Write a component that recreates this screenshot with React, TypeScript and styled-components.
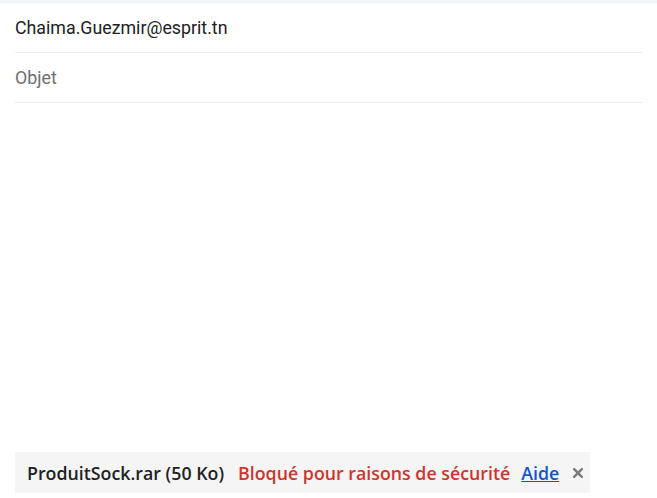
import React from "react";
import styled, {createGlobalStyle} from "styled-components";

const GlobalStyle = createGlobalStyle`
  html, body {
    margin: 0;
    padding: 0;
    background: #ffffff;
  }
  body {
    font-family: Roboto, "Liberation Sans", sans-serif;
  }
`;

export default function App() {
    return (
        <Page>
            <GlobalStyle />
            <TopStrip />
            <Fields>
                <FieldRow>
                    <FieldText>Chaima.Guezmir@esprit.tn</FieldText>
                </FieldRow>
                <FieldRow>
                    <FieldText $placeholder>Objet</FieldText>
                </FieldRow>
            </Fields>
            <Body />
            <Attachment>
                <FileName>ProduitSock.rar (50 Ko)</FileName>
                <Blocked>Bloqué pour raisons de sécurité</Blocked>
                <HelpLink href="#">Aide</HelpLink>
                <CloseButton aria-label="Supprimer">
                    <svg width="10" height="10" viewBox="0 0 10 10">
                        <path d="M1.2 1.2 L8.8 8.8 M8.8 1.2 L1.2 8.8" stroke="#7a7a7a" strokeWidth="2.4" strokeLinecap="square" />
                    </svg>
                </CloseButton>
            </Attachment>
        </Page>
    );
}

const Page = styled.div`
  display: flex;
  flex-direction: column;
  width: 657px;
  height: 498px;
  background: #ffffff;
`;

const TopStrip = styled.div`
  height: 3px;
  background: #f2f6fc;
`;

const Fields = styled.div`
  display: flex;
  flex-direction: column;
  padding: 0 15px;
`;

const FieldRow = styled.div`
  height: 49px;
  display: flex;
  align-items: center;
  border-bottom: 1px solid #e8ecef;
`;

const FieldText = styled.div<{ $placeholder?: boolean }>`
  font-size: 17.8px;
  color: ${p => p.$placeholder ? "#6f6f6f" : "#202124"};
`;

const Body = styled.div`
  flex: 1;
`;

const Attachment = styled.div`
  align-self: flex-start;
  display: flex;
  align-items: center;
  gap: 14px;
  height: 41px;
  margin: 0 0 5px 15px;
  padding: 0 3px 0 12px;
  background: #f5f5f5;
  font-family: "Open Sans", Roboto, sans-serif;
  font-size: 17.8px;
  font-weight: 600;
`;

const FileName = styled.span`
  color: #222222;
`;

const Blocked = styled.span`
  color: #d0342c;
`;

const HelpLink = styled.a`
  color: #1155cc;
  text-decoration: underline;
  margin-left: -3px;
`;

const CloseButton = styled.span`
  display: flex;
  align-items: center;
  margin-left: -4px;
  padding: 4px;
  cursor: pointer;
`;
